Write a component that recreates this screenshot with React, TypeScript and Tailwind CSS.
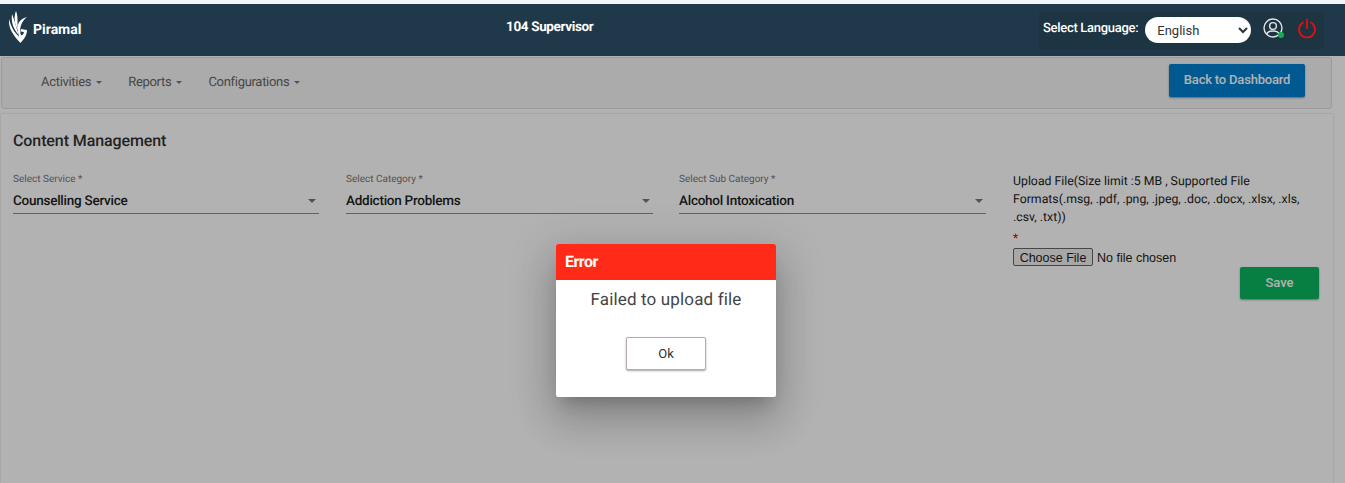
const PiramalLogo = () => (
  <svg className="mb-[6px]" width="20" height="33" viewBox="0 0 20 33" fill="#fff">
    <path d="M1 8 C0.5 16 3 22 12.5 32 L13 27 C7 23 3.5 17 1 8 Z" />
    <path d="M4 3 C3 11 5 18 11 24 C8 17 7 10 4 3 Z" />
    <path d="M8 0 C5.5 6 6.5 13 10 19 C9 13 10.5 6 8 0 Z" />
    <path d="M19 6 C11 8 8 14 10 21 C11 26 12 29 12.5 32 C15 29 19 25 19 19 L13 18 L12.5 20.5 L16 21 C15.5 23.5 14 25 13 24 C11 19 12.5 11 19 6 Z" />
  </svg>
);

const Caret = () => <span className="ml-[5px] inline-block border-x-[3px] border-t-[3px] border-x-transparent border-t-[#777] align-middle" />;

const Field = ({ label, value, className }: { label: string; value: string; className: string }) => (
  <div className={className}>
    <div className="text-[10px] leading-[12px] text-[#777]">{label}</div>
    <div className="mt-[3px] flex h-[25px] items-center justify-between border-b border-[#8f8f8f]">
      <span className="text-[13.5px] font-medium tracking-[-0.25px] text-[#222]">{value}</span>
      <span className="mr-[3px] border-x-[4px] border-t-[4px] border-x-transparent border-t-[#777]" />
    </div>
  </div>
);

export default function App() {
  return (
    <div className="relative h-[483px] w-[1345px] overflow-hidden bg-white font-['Roboto',sans-serif] [text-rendering:geometricPrecision]">
      <div className="h-[4px] bg-[#f4f4fb]" />
      <header className="flex h-[52px] items-center bg-[#2d526a] pl-[8px] pr-[21px]">
        <div className="relative z-10 flex w-[498px] items-center gap-[5px]">
          <PiramalLogo />
          <span className="mt-[1px] text-[14px] font-bold text-white">Piramal</span>
        </div>
        <div className="relative z-10 mb-[6px] text-[13.5px] font-bold tracking-[-0.35px] text-white">104 Supervisor</div>
        <div className="relative z-10 ml-auto flex h-[37px] w-[285px] items-center bg-[#1d3443] pl-[4px]">
          <span className="mb-[3px] text-[13px] font-medium tracking-[-0.3px] text-white">Select Language:</span>
          <select className="ml-[7px] h-[26px] w-[106px] rounded-[14px] bg-white pl-[8px] text-[13px] text-[#333]">
            <option>English</option>
          </select>
          <div className="relative mb-[4px] ml-[12px]">
            <svg className="block" width="20" height="20" viewBox="0 0 20 20" fill="none" stroke="#e4e4e4" strokeWidth="1.4">
              <circle cx="10" cy="10" r="9" />
              <circle cx="10" cy="8" r="3.4" />
              <path d="M4 16 C5 12 15 12 16 16" />
            </svg>
            <span className="absolute bottom-[0px] right-[-1px] h-[6px] w-[6px] rounded-full bg-[#0fb050]" />
          </div>
          <svg className="mb-[4px] ml-[14px]" width="20" height="21" viewBox="0 0 20 21" fill="none" stroke="#e01010" strokeWidth="1.8" strokeLinecap="round">
            <path d="M10 1.5 V10" />
            <path d="M6 4.5 A8 8 0 1 0 14 4.5" />
          </svg>
        </div>
      </header>
      <main className="w-[1333px]">
        <nav className="ml-[1px] mt-[1px] flex h-[52px] w-[1331px] items-center justify-between rounded-[3px] border border-[#ddd] bg-[#f5f5f5] pl-[39px] pr-[26px]">
          <div className="mb-[1px] flex gap-[26px] text-[13px] tracking-[-0.3px] text-[#666]">
            <span>Activities<Caret /></span>
            <span>Reports<Caret /></span>
            <span>Configurations<Caret /></span>
          </div>
          <button className="mb-[6px] h-[33px] w-[136px] rounded-[2px] bg-[#0081d0] text-[13px] font-medium tracking-[-0.2px] text-white shadow-[0_1px_2px_rgba(0,0,0,0.4)]">Back to Dashboard</button>
        </nav>
        <section className="ml-[1px] mt-[5px] h-[369px] bg-white pl-[12px] pt-[17px] shadow-[0_0_2px_rgba(0,0,0,0.2)]">
          <h1 className="text-[16px] font-medium leading-[20px] tracking-[-0.1px] text-[#333]">Content Management</h1>
          <div className="mt-[23px] flex items-start">
            <Field className="w-[306px]" label="Select Service *" value="Counselling Service" />
            <Field className="ml-[27px] w-[307px]" label="Select Category *" value="Addiction Problems" />
            <Field className="ml-[26px] w-[307px]" label="Select Sub Category *" value="Alcohol Intoxication" />
            <div className="ml-[27px] w-[306px]">
              <p className="mt-[-1px] w-[298px] text-[12.3px] leading-[18px] text-[#222]">Upload File(Size limit :5 MB , Supported File Formats(.msg, .pdf, .png, .jpeg, .doc, .docx, .xlsx, .xls, .csv, .txt))</p>
              <div className="mt-[4px] h-[14px] text-[12px] leading-[14px] text-[#d00]">*</div>
              <input
                type="file"
                className="mt-[3px] block font-['Liberation_Sans',sans-serif] text-[12.5px] leading-[18px] text-[#222] file:mr-[4px] file:h-[18px] file:w-[80px] file:rounded-[2px] file:border file:border-[#666] file:bg-[#efefef]"
              />
              <div className="flex justify-end">
                <button className="h-[32px] w-[79px] rounded-[2px] bg-[#0bb760] text-[13px] font-medium text-white shadow-[0_1px_2px_rgba(0,0,0,0.4)]">Save</button>
              </div>
            </div>
          </div>
        </section>
      </main>

      {/* backdrop + alert */}
      <div className="absolute inset-x-0 bottom-0 top-[4px] bg-black/30">
        <div className="absolute left-[556px] top-[240px] h-[153px] w-[220px] overflow-hidden rounded-[2px] bg-white shadow-[0_11px_15px_-7px_rgba(0,0,0,0.2),0_24px_38px_3px_rgba(0,0,0,0.14),0_9px_46px_8px_rgba(0,0,0,0.12)]">
          <div className="flex h-[36px] items-center bg-[#ff2a17] pl-[9px] text-[16px] font-bold tracking-[-0.5px] text-white">Error</div>
          <p className="mt-[9px] text-center text-[17px] leading-[22px] tracking-[0.15px] text-[#444]">Failed to upload file</p>
          <div className="mt-[26px] flex justify-center">
            <button className="h-[33px] w-[80px] rounded-[2px] border border-[#b5a9ad] bg-white text-[13px] text-[#333] shadow-[0_1px_2px_rgba(0,0,0,0.35)]">Ok</button>
          </div>
        </div>
      </div>
    </div>
  );
}
